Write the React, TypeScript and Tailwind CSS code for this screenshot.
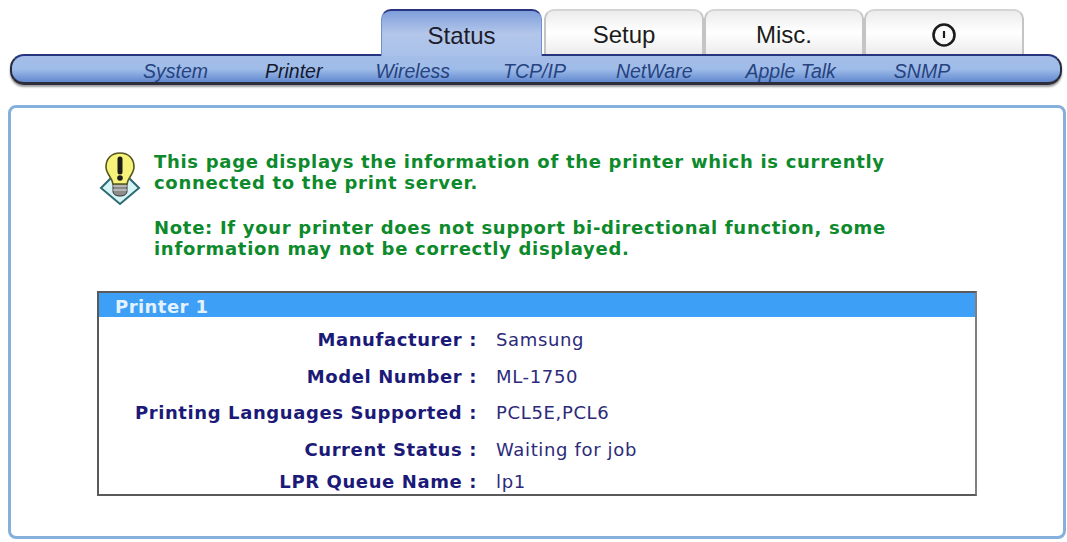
const subItems = [
  { label: "System", ml: "ml-[131px]", active: false },
  { label: "Printer", ml: "ml-[57px]", active: true },
  { label: "Wireless", ml: "ml-[53px]", active: false },
  { label: "TCP/IP", ml: "ml-[53px]", active: false },
  { label: "NetWare", ml: "ml-[50px]", active: false },
  { label: "Apple Talk", ml: "ml-[53px]", active: false },
  { label: "SNMP", ml: "ml-[58px]", active: false },
];

const rows = [
  { label: "Manufacturer :", value: "Samsung", h: "h-[37px]" },
  { label: "Model Number :", value: "ML-1750", h: "h-[36px]" },
  { label: "Printing Languages Supported :", value: "PCL5E,PCL6", h: "h-[37px]" },
  { label: "Current Status :", value: "Waiting for job", h: "h-[36px]" },
  { label: "LPR Queue Name :", value: "lp1", h: "mt-[2px] h-[25px]" },
];

function Tab({ children, active }: { children: React.ReactNode; active?: boolean }) {
  return (
    <div
      className={
        active
          ? "relative z-10 -mb-[2px] flex h-[47px] w-[161px] items-center justify-center rounded-t-[10px] border-x border-t-2 border-x-[#6f8fcb] border-t-[#27357f] bg-gradient-to-b from-[#7f9fdb] via-[#b3c6ea] to-[#a9c1ea] pt-[4px] text-[24px] text-[#1c1c2a]"
          : "flex h-[45px] w-[160px] items-center justify-center rounded-t-[10px] border-x-2 border-t-2 border-x-[#c4c4c4] border-t-[#d4d4d4] bg-gradient-to-b from-[#ececec] via-white to-[#ececec] pt-[4px] text-[24px] text-[#1c1c1c]"
      }
    >
      {children}
    </div>
  );
}

function PowerIcon() {
  return (
    <svg width="26" height="26" viewBox="0 0 26 26" fill="none">
      <circle cx="13" cy="13" r="10.5" stroke="#1c1c1c" strokeWidth="2.6" />
      <path d="M13 9v7" stroke="#1c1c1c" strokeWidth="2.2" />
    </svg>
  );
}

function BulbIcon() {
  return (
    <svg width="42" height="54" viewBox="0 0 42 54" fill="none">
      <path d="M21 17 40 36 21 52 2 36Z" fill="#d6f3f5" stroke="#2c6a73" strokeWidth="2" />
      <path d="M14 30h14v9c0 3-2 5-7 5s-7-2-7-5Z" fill="#8c8c8c" stroke="#333" />
      <path d="M14 34h14M14 38h14" stroke="#ddd" strokeWidth="1.2" />
      <path
        d="M21 1C12 1 7 7 7 15c0 7 6 10 7 17h14c1-7 7-10 7-17 0-8-5-14-14-14Z"
        fill="#f6f27a"
        stroke="#55551f"
        strokeWidth="1.6"
      />
      <path d="M21 7v13" stroke="#1c1c1c" strokeWidth="5" strokeLinecap="round" />
      <circle cx="21" cy="26" r="2.8" fill="#1c1c1c" />
    </svg>
  );
}

export default function App() {
  return (
    <div className="h-[542px] w-[1067px] overflow-hidden bg-white font-['Liberation_Sans',sans-serif]">
      <div className="flex pl-[381px] pt-[9px]">
        <Tab active>Status</Tab>
        <div className="ml-[2px] flex">
          <Tab>Setup</Tab>
          <Tab>Misc.</Tab>
          <Tab>
            <PowerIcon />
          </Tab>
        </div>
      </div>

      <div className="ml-[10px] flex h-[31px] w-[1052px] items-center rounded-[14px] border-x-2 border-t-2 border-b-[3px] border-x-[#262b3c] border-t-[#27357f] border-b-[#2e2e3a] bg-gradient-to-b from-[#a4bde9] via-[#9fbce9] to-[#6289cf] pt-[6px] text-[19.5px] italic text-[#27437f] shadow-[0_2px_2px_rgba(60,60,70,0.5)]">
        {subItems.map((item) => (
          <span key={item.label} className={item.active ? `${item.ml} text-[#14182c]` : item.ml}>
            {item.label}
          </span>
        ))}
      </div>

      <div className="ml-[8px] mt-[20px] h-[434px] w-[1058px] rounded-[8px] border-[3px] border-[#86b0dc] bg-white pl-[86px] pt-[43px] font-['DejaVu_Sans',sans-serif]">
        <div className="flex">
          <div className="ml-[2px] mt-[1px] w-[56px] shrink-0">
            <BulbIcon />
          </div>
          <div className="-ml-[1px] text-[18px] font-bold leading-[21px] tracking-[0.7px] text-[#0d8a2c]">
            <p>
              This page displays the information of the printer which is currently
              <br />
              connected to the print server.
            </p>
            <p className="mt-[24px]">
              Note: If your printer does not support bi-directional function, some
              <br />
              information may not be correctly displayed.
            </p>
          </div>
        </div>

        <div className="mt-[32px] h-[205px] w-[880px] border-2 border-[#5a5a5a] border-r-[#808080]">
          <div className="flex h-[24px] items-center bg-[#3d9ff5] pl-[16px] pt-[2px] text-[18px] font-bold tracking-[0.45px] text-[#e4f2ff]">
            Printer 1
          </div>
          <div className="pt-[4px]">
            {rows.map((row) => (
              <div key={row.label} className={`flex items-center ${row.h}`}>
                <div className="w-[378px] text-right text-[18px] font-bold tracking-[0.6px] text-[#1b1a78]">{row.label}</div>
                <div className="ml-[19px] text-[18px] tracking-[0.65px] text-[#2c2a7a]">{row.value}</div>
              </div>
            ))}
          </div>
        </div>
      </div>
    </div>
  );
}
